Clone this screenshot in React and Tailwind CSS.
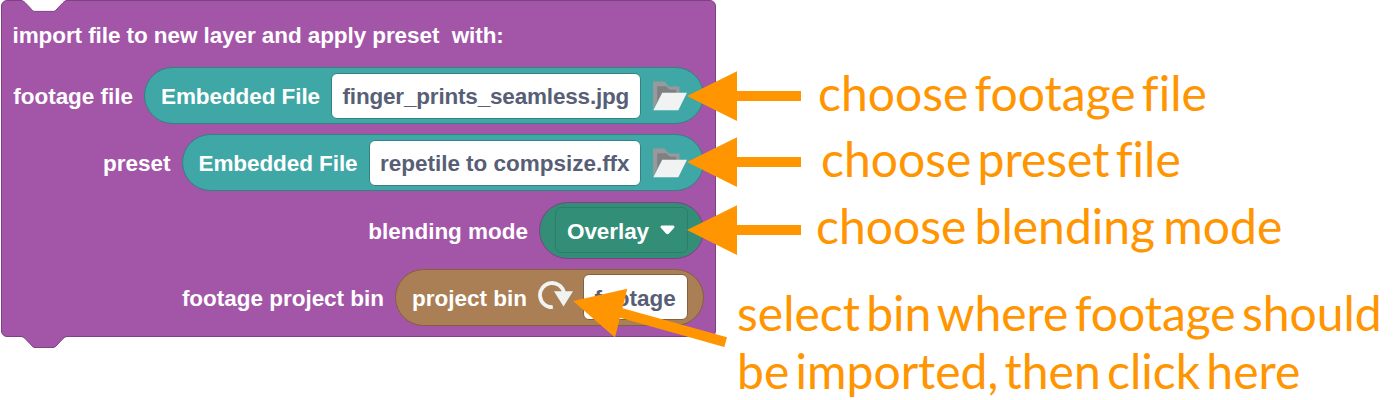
const labelFont = "font-['Liberation_Sans',Arial,sans-serif] font-bold text-[22.5px] leading-[26px] tracking-[-0.08px] whitespace-pre";
const noteFont = "font-['Lato','Open_Sans',sans-serif] text-[#ff9500] whitespace-pre [font-variant-ligatures:none]";

function FolderIcon() {
  return (
    <svg className="block h-[30px] w-[34px] shrink-0" viewBox="0 0 34 30">
      <path d="M0 0.5H11.5L16 5.5H26.5V14H7L0 29Z" fill="#98999c" />
      <path d="M4.2 5.2H13L17 8.8H23.3V12H11L4.2 22Z" fill="#7f8084" />
      <path d="M9.2 11.7H34L25.3 29.3H0.3Z" fill="#f1f3f2" />
    </svg>
  );
}

function ReloadIcon() {
  return (
    <svg className="block h-[30px] w-[36px] shrink-0" viewBox="0 0 36 30">
      <path d="M14.8 26.2A12.1 12.1 0 1 1 26 12" fill="none" stroke="#f1f3f2" strokeWidth="3.8" />
      <path d="M16 10.3H35L25.5 25.4Z" fill="#f1f3f2" />
    </svg>
  );
}

function Field({ children, className, textClass = "pt-[2px]" }) {
  return (
    <div className={`flex h-[46px] shrink-0 items-center rounded-[6px] border bg-white pl-[10.5px] text-[#575e75] ${className}`}>
      <span className={textClass}>{children}</span>
    </div>
  );
}

function Row({ label, children, className, labelClass = "pt-[2px]" }) {
  return (
    <div className="flex h-[67.3px] items-start justify-end gap-[11px]">
      <div className={`flex h-[57px] items-center tracking-[-0.02px] ${labelClass}`}>{label}</div>
      <div className={`flex h-[57px] shrink-0 items-center rounded-full border-[1.5px] ${className}`}>{children}</div>
    </div>
  );
}

function Block() {
  return (
    <div className={`relative ml-px h-[337px] w-[715px] shrink-0 rounded-[6px] border border-[#7f4184] bg-[#a355a8] text-white ${labelFont}`}>
      <svg className="absolute -top-px left-[18px] h-[13px] w-[49px]" viewBox="0 0 49 13">
        <path d="M0 0C2 0 3.500 1 5 2.500L11 8.800C12.500 10.500 13 11.400 15 11.400H33C35 11.400 35.500 10.500 37 9L43 2.700C44.500 1.200 45.500 0 48 0Z" fill="#fff" />
        <path d="M0 0.500C2 0.500 3.500 1 5 2.500L11 8.800C12.500 10.500 13 11.400 15 11.400H33C35 11.400 35.500 10.500 37 9L43 2.700C44.500 1.200 45.500 0.500 48 0.500" fill="none" stroke="#7f4184" />
      </svg>
      <svg className="absolute top-[334px] left-[18px] h-[14px] w-[49px]" viewBox="0 0 49 14">
        <path d="M0 0V1.500C2 1.500 3.500 2 5 3.500L11 9.800C12.500 11.500 13 12.500 15 12.500H33C35 12.500 35.500 11.500 37 10L43 3.700C44.500 2.200 45.500 1.500 48 1.500V0Z" fill="#a355a8" />
        <path d="M0 1.500C2 1.500 3.500 2 5 3.500L11 9.800C12.500 11.500 13 12.500 15 12.500H33C35 12.500 35.500 11.500 37 10L43 3.700C44.500 2.200 45.500 1.500 48 1.500" fill="none" stroke="#7f4184" />
      </svg>
      <div className="flex h-[66px] items-center pt-[4px] pl-[10.5px]">import file to new layer and apply preset  with:</div>
      <div className="flex flex-col pr-[11px]">
        <Row label="footage file" className="w-[560px] border-[#32827f] bg-[#3fa7a6] pl-[16px]">
          <span className="w-[170px] pt-[2px]">Embedded File</span>
          <Field className="w-[310px] border-[#32827f] tracking-[-0.18px]">finger_prints_seamless.jpg</Field>
          <span className="ml-[11.500px]"><FolderIcon /></span>
        </Row>
        <Row label="preset" className="w-[522.5px] border-[#32827f] bg-[#3fa7a6] pl-[16px]">
          <span className="w-[170px] pt-[2px]">Embedded File</span>
          <Field className="w-[272.500px] border-[#32827f] tracking-[-0.02px]">repetile to compsize.ffx</Field>
          <span className="ml-[11.500px]"><FolderIcon /></span>
        </Row>
        <Row label="blending mode" labelClass="pt-[3.5px]" className="w-[165px] border-[#7f4184] bg-[#328e76] pl-[15px]">
          <div className="flex h-[46px] w-[133px] items-center rounded-[6px] border border-[#2b7f66] pl-[11px]">
            <span className="w-[92.500px] pt-[3.5px]">Overlay</span>
            <svg className="block h-[10px] w-[15px]" viewBox="0 0 15 10">
              <path d="M2 0.500H13C14.500 0.500 15 2 14 3L9 8.500C8 9.500 7 9.500 6 8.500L1 3C0 2 0.500 0.500 2 0.500Z" fill="#fff" />
            </svg>
          </div>
        </Row>
        <Row label="footage project bin" labelClass="pt-[3.5px]" className="w-[309px] border-[#85603c] bg-[#aa7f55] pl-[16px] tracking-normal">
          <span className="w-[126px] pt-[3.5px]">project bin</span>
          <span className="-mt-[2px]"><ReloadIcon /></span>
          <Field textClass="pt-[3.5px]" className="ml-[9px] w-[105px] border-[#85603c]">footage</Field>
        </Row>
      </div>
    </div>
  );
}

export default function App() {
  return (
    <div className="relative flex h-[400px] w-[1400px] overflow-hidden bg-white">
      <Block />
      <div className={`flex flex-col text-[48px] leading-[66px] ${noteFont}`}>
        <div className="mt-[60px] h-[66px] pl-[102px] [word-spacing:-6px]">choose footage file</div>
        <div className="h-[68px] pl-[105px] [word-spacing:-6px]">choose preset file</div>
        <div className="h-[66px] pl-[100px] [word-spacing:-4px]">choose blending mode</div>
        <div className="mt-[25px] pl-[21px] leading-[58px]">
          <div className="[word-spacing:-6px]">select bin where footage should</div>
          <div className="[word-spacing:-6px]">be imported, then click here</div>
        </div>
      </div>
      <svg className="pointer-events-none absolute inset-0 h-[400px] w-[1400px]" viewBox="0 0 1400 400" fill="#ff9500">
        <path d="M687 96L737 71.200V91H801V101H737V121Z" />
        <path d="M687 162L737 137.200V157H801V167H737V187Z" />
        <path d="M687 230L737 205.200V225H801V235H737V255Z" />
        <path d="M573 301L627.300 288.800L622.500 308.200L727 337.200L724.300 347L620 317.800L615 337.500Z" />
      </svg>
    </div>
  );
}
